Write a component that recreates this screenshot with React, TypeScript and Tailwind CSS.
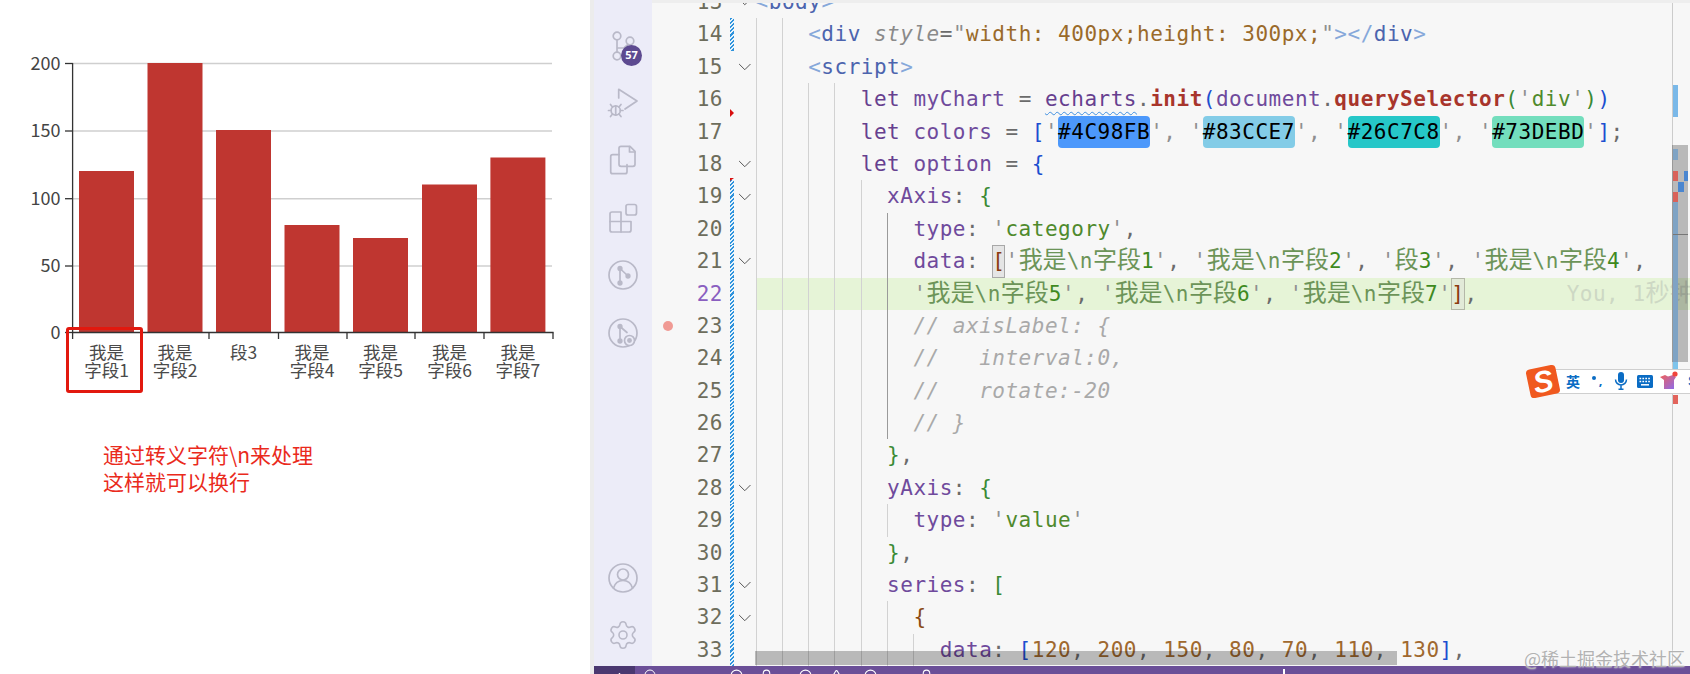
import React from 'react';
import { ChevronDown, Settings, Circle, Triangle, Check, Bell } from 'lucide-react';

// token colours
const kw = 'text-[#66408f]';
const prop = 'text-[#6f4a9c]';
const op = 'text-[#6b6b6b]';
const str = 'text-[#4f8a2d]';
const cjk = 'text-[#6c9458]';
const digit = 'text-[#3f8a1f]';
const quote = 'text-[#8f8f8f]';
const blue = 'text-[#1c4fd0]';
const green = 'text-[#3a8a34]';
const brown = 'text-[#8a4a12]';
const num = 'text-[#a0692f]';
const tagP = 'text-[#86a8da]';
const tag = 'text-[#4c64ae]';
const attr = 'text-[#8a8a8a] italic';
const val = 'text-[#9a6a2a]';
const fn = 'text-[#a8352c] font-bold';
const comment = 'text-[#a9a9a9] italic';
const box = 'inline-block h-[32.4px] bg-[#e5e5e5] outline outline-[1px] -outline-offset-1 outline-[#a8a8a8] text-[#8a3a10]';
const box2 = 'inline-block h-[32.4px] bg-[#e2ead8] outline outline-[1px] -outline-offset-1 outline-[#b4b8a8] text-[#8a3a10]';
const chipA = 'inline-block h-[32.4px] rounded-[4px] bg-[#4C98FB] text-black';
const chipB = 'inline-block h-[32.4px] rounded-[4px] bg-[#83CCE7] text-black';
const chipC = 'inline-block h-[32.4px] rounded-[4px] bg-[#26C7C8] text-black';
const chipD = 'inline-block h-[32.4px] rounded-[4px] bg-[#73DEBD] text-black';
const wavy = 'text-[#66408f] underline decoration-wavy decoration-[#3f8fe0] decoration-1 underline-offset-[5px]';
const ghost = 'text-[#cdd8c4] ml-[89px]';

type Token = [string, string];
type Row = { n: number; g: number; fold?: boolean; change?: boolean; active?: boolean; tokens: Token[] };

const strItem = (c1: string, c2: string, d: string, tail: string): Token[] => [
  ["'", quote],
  [c1 + '\\n' + c2, cjk],
  [d, digit],
  ["'", quote],
  [tail, op],
];

const rows: Row[] = [
  { n: 13, g: 0, fold: true, tokens: [['<', tagP], ['body', tag], ['>', tagP]] },
  { n: 14, g: 2, change: true, tokens: [['<', tagP], ['div', tag], [' ', op], ['style', attr], ['=', op], ['"', quote], ['width: 400px;height: 300px;', val], ['"', quote], ['>', tagP], ['</', tagP], ['div', tag], ['>', tagP]] },
  { n: 15, g: 2, fold: true, tokens: [['<', tagP], ['script', tag], ['>', tagP]] },
  { n: 16, g: 4, tokens: [['let', kw], [' myChart ', prop], ['= ', op], ['echarts', wavy], ['.', op], ['init', fn], ['(', blue], ['document', prop], ['.', op], ['querySelector', fn], ['(', green], ["'", quote], ['div', str], ["'", quote], [')', green], [')', blue]] },
  { n: 17, g: 4, tokens: [['let', kw], [' colors ', prop], ['= ', op], ['[', blue], ["'", quote], ['#4C98FB', chipA], ["', '", quote], ['#83CCE7', chipB], ["', '", quote], ['#26C7C8', chipC], ["', '", quote], ['#73DEBD', chipD], ["'", quote], [']', blue], [';', op]] },
  { n: 18, g: 4, fold: true, tokens: [['let', kw], [' option ', prop], ['= ', op], ['{', blue]] },
  { n: 19, g: 5, fold: true, change: true, tokens: [['xAxis', prop], [': ', op], ['{', green]] },
  { n: 20, g: 6, change: true, active: true, tokens: [['type', prop], [': ', op], ["'", quote], ['category', str], ["'", quote], [',', op]] },
  { n: 21, g: 6, fold: true, change: true, active: true, tokens: [['data', prop], [': ', op], ['[', box], ...strItem('我是', '字段', '1', ', '), ...strItem('我是', '字段', '2', ', '), ["'", quote], ['段', cjk], ['3', digit], ["'", quote], [', ', op], ...strItem('我是', '字段', '4', ',')] },
  { n: 22, g: 6, change: true, active: true, tokens: [...strItem('我是', '字段', '5', ', '), ...strItem('我是', '字段', '6', ', '), ...strItem('我是', '字段', '7', ''), [']', box2], [',', op], ['You, 1秒钟前', ghost]] },
  { n: 23, g: 6, change: true, active: true, tokens: [['// axisLabel: {', comment]] },
  { n: 24, g: 6, change: true, active: true, tokens: [['//   interval:0,', comment]] },
  { n: 25, g: 6, change: true, active: true, tokens: [['//   rotate:-20', comment]] },
  { n: 26, g: 6, change: true, active: true, tokens: [['// }', comment]] },
  { n: 27, g: 5, change: true, tokens: [['}', green], [',', op]] },
  { n: 28, g: 5, fold: true, change: true, tokens: [['yAxis', prop], [': ', op], ['{', green]] },
  { n: 29, g: 6, change: true, tokens: [['type', prop], [': ', op], ["'", quote], ['value', str], ["'", quote]] },
  { n: 30, g: 5, change: true, tokens: [['}', green], [',', op]] },
  { n: 31, g: 5, fold: true, change: true, tokens: [['series', prop], [': ', op], ['[', green]] },
  { n: 32, g: 6, fold: true, change: true, tokens: [['{', brown]] },
  { n: 33, g: 7, change: true, tokens: [['data', prop], [': ', op], ['[', blue], ['120', num], [', ', op], ['200', num], [', ', op], ['150', num], [', ', op], ['80', num], [', ', op], ['70', num], [', ', op], ['110', num], [', ', op], ['130', num], [']', blue], [',', op]] },
];

// CJK sits in a bigger size so that it keeps two cells of the mono grid
const Code: React.FC<{ text: string }> = ({ text }) => (
  <>
    {text.split(/([\u4e00-\u9fff]+)/).map((part, i) =>
      /[\u4e00-\u9fff]/.test(part) ? (
        <span key={i} className="text-[24px] tracking-normal leading-none">{part}</span>
      ) : (
        part
      )
    )}
  </>
);

const EditorRow: React.FC<{ row: Row }> = ({ row }) => {
  const hl = row.n === 22;
  return (
    <div className="relative flex h-[32.4px] leading-[33.6px]">
      <div className={hl ? 'w-[71px] shrink-0 text-right text-[#8a5fc0]' : 'w-[71px] shrink-0 text-right text-[#6d6d5c]'}>{row.n}</div>
      <div className="w-[7px] shrink-0"></div>
      <div className={row.change ? 'w-[4px] shrink-0 bg-[repeating-linear-gradient(135deg,#2f93dc_0,#2f93dc_1.5px,#e8f4fc_1.5px,#e8f4fc_3px)]' : 'w-[4px] shrink-0'}></div>
      <div className="flex w-[21.6px] shrink-0 items-center justify-center">
        {row.fold && <ChevronDown size={22} strokeWidth={1.1} className="text-[#555555]" />}
      </div>
      <div className={hl ? 'flex min-w-0 flex-1 bg-[#e6f4d7] overflow-hidden' : 'flex min-w-0 flex-1 overflow-hidden'}>
        {Array.from({ length: row.g }).map((_, i) => (
          <div
            key={i}
            className={row.active && i === 5 ? 'h-full w-[26.3px] shrink-0 border-l border-[#9a9a9a]' : 'h-full w-[26.3px] shrink-0 border-l border-[#d2d2d2]'}
          ></div>
        ))}
        <div className="whitespace-pre">
          {row.tokens.map(([t, c], i) => (
            <span key={i} className={c}><Code text={t} /></span>
          ))}
        </div>
      </div>
      {row.n === 23 && <div className="absolute left-[11px] top-[11px] h-[10px] w-[10px] rounded-full bg-[#f09a94]"></div>}
      {row.n === 17 && <div className="absolute left-[78px] top-[-7px] h-0 w-0 border-y-[4px] border-l-[4px] border-y-transparent border-l-[#d80f0f]"></div>}
      {row.n === 19 && <div className="absolute left-[78px] top-[-2px] h-0 w-0 border-b-[3px] border-l-[4px] border-b-transparent border-l-[#d80f0f]"></div>}
    </div>
  );
};

const Icon: React.FC<{ children: React.ReactNode }> = ({ children }) => (
  <div className="relative flex h-[57.4px] items-center justify-center">
    <svg width="32" height="32" viewBox="0 0 32 32" fill="none" stroke="#b9b9c8" strokeWidth="1.7" strokeLinecap="round" strokeLinejoin="round">
      {children}
    </svg>
  </div>
);

const Sidebar = () => (
  <div className="flex w-[58px] shrink-0 flex-col justify-between bg-[#ececf8] pb-[2px] pt-[17px]">
    <div>
      <div className="relative">
        <Icon>
          <circle cx="10" cy="6" r="3.8" />
          <circle cx="23" cy="11" r="3.8" />
          <circle cx="10" cy="26" r="3.8" />
          <path d="M10 10v12M10 18h7l4-3.5" />
        </Icon>
        <div className="absolute left-[27px] top-[28px] flex h-[21px] w-[21px] items-center justify-center rounded-full bg-[#5d4a90] font-['Noto_Sans',sans-serif] text-[11px] font-bold text-white">57</div>
      </div>
      <Icon>
        <path d="M11.7 11V2.3L30 14l-12 8" />
        <circle cx="8.7" cy="23.5" r="4.6" />
        <path d="M8.7 19v9M1.5 23.5h2.6M13.4 23.5h2.6M3.5 17.5l2 2.5M14 17.5L12 20M3.5 29.5l2-2.5M14 29.5L12 27" />
      </Icon>
      <Icon>
        <path d="M12 4.3a2 2 0 0 1 2-2h9l5 5v13a2 2 0 0 1-2 2H14a2 2 0 0 1-2-2z" />
        <path d="M22.5 2.5V8H28" />
        <path d="M12 10.7H5.7a2 2 0 0 0-2 2v15a2 2 0 0 0 2 2H18a2 2 0 0 0 2-2v-7" />
      </Icon>
      <Icon>
        <path d="M3 12a2 2 0 0 1 2-2h9v9.5h10V28a2 2 0 0 1-2 2H5a2 2 0 0 1-2-2z" />
        <path d="M3 19.5h11M14 19.5V30" />
        <rect x="19" y="2.5" width="10.5" height="10.5" rx="2" />
      </Icon>
      <Icon>
        <circle cx="16" cy="16" r="14" />
        <circle cx="13" cy="9.5" r="1.8" fill="#b9b9c8" />
        <circle cx="21" cy="17" r="1.8" fill="#b9b9c8" />
        <circle cx="13" cy="24" r="1.8" fill="#b9b9c8" />
        <path d="M13 9.5V24M13 9.5l8 7.5" />
      </Icon>
      <Icon>
        <circle cx="16" cy="16" r="14" />
        <circle cx="13" cy="9.5" r="1.8" fill="#b9b9c8" />
        <circle cx="13" cy="24" r="1.8" fill="#b9b9c8" />
        <path d="M13 9.5V24M13 9.5l7 6" />
        <circle cx="22.5" cy="23.5" r="5" fill="#ececf8" />
        <circle cx="22.5" cy="23.5" r="1.6" fill="#b9b9c8" />
      </Icon>
    </div>
    <div>
      <Icon>
        <circle cx="16" cy="16" r="14" />
        <circle cx="16" cy="12.5" r="5.5" />
        <path d="M6.5 26c1.5-5 5-7.5 9.5-7.5s8 2.5 9.5 7.5" />
      </Icon>
      <div className="flex h-[57.4px] items-center justify-center">
        <Settings size={32} strokeWidth={1.2} className="text-[#b9b9c8]" />
      </div>
    </div>
  </div>
);

const bars = [
  { x: 79, top: 171 },
  { x: 147.5, top: 63 },
  { x: 216, top: 130 },
  { x: 284.5, top: 225 },
  { x: 353, top: 238 },
  { x: 422, top: 184.5 },
  { x: 490.4, top: 157.5 },
];
const gridY = [63.5, 131, 198.7, 266, 332.5];
const ticksX = [72.6, 141, 209, 278.5, 347, 415, 484, 553];
const labels = [
  ['我是', '字段1'],
  ['我是', '字段2'],
  ['段3'],
  ['我是', '字段4'],
  ['我是', '字段5'],
  ['我是', '字段6'],
  ['我是', '字段7'],
];

const Chart = () => (
  <svg width="590" height="441" className="block font-['Noto_Sans_CJK_SC',sans-serif]">
    {gridY.slice(0, 4).map(y => (
      <line key={y} x1="72" x2="552" y1={y} y2={y} stroke="#cfcfcf" strokeWidth="1.5" />
    ))}
    {bars.map(b => (
      <rect key={b.x} x={b.x} y={b.top} width="55" height={332.5 - b.top} fill="#bf3630" />
    ))}
    {gridY.map(y => (
      <line key={y} x1="65" x2="72.6" y1={y} y2={y} stroke="#333333" strokeWidth="1.3" />
    ))}
    <line x1="72.6" x2="72.6" y1="63" y2="333" stroke="#333333" strokeWidth="1.3" />
    <line x1="72" x2="553.6" y1="332.5" y2="332.5" stroke="#333333" strokeWidth="1.3" />
    {ticksX.map(x => (
      <line key={x} x1={x} x2={x} y1="332.5" y2="339" stroke="#333333" strokeWidth="1.3" />
    ))}
    {['200', '150', '100', '50', '0'].map((t, i) => (
      <text key={t} x="60.5" y={gridY[i] + 6} textAnchor="end" fontSize="18" fill="#444444">{t}</text>
    ))}
    {labels.map((l, i) =>
      l.map((t, j) => (
        <text key={t} x={bars[i].x + 27.5} y={358.5 + j * 18} textAnchor="middle" fontSize="17.5" fill="#4a4a4a">{t}</text>
      ))
    )}
  </svg>
);

const Ime = () => (
  <div className="absolute left-[1526px] top-[362px] flex h-[38px] w-[164px] items-center overflow-hidden">
    <div className="absolute left-[23px] top-[7px] h-[25px] w-[150px] border-y border-[#cfcfcf] bg-white"></div>
    <div className="relative z-10 ml-[2px] flex h-[29px] w-[30px] shrink-0 -rotate-12 items-center justify-center rounded-[4px] bg-[#f0591f] font-['Liberation_Sans',sans-serif] text-[30px] font-bold italic leading-none text-white">S</div>
    <div className="relative z-10 ml-[3px] flex shrink-0 items-center text-[#0a6cc4]">
      <div className="flex w-[24px] shrink-0 justify-center font-['Noto_Sans_CJK_SC',sans-serif] text-[14px] font-bold">英</div>
      <div className="flex w-[24px] shrink-0 items-center justify-center gap-[3px] font-['Noto_Sans',sans-serif] text-[13px] font-bold"><span className="h-[4px] w-[4px] -translate-y-[3px] rounded-full bg-[#0a6cc4]"></span>,</div>
      <div className="flex w-[24px] shrink-0 justify-center">
        <svg width="14" height="18" viewBox="0 0 14 18">
          <rect x="4" y="0" width="6" height="11" rx="3" fill="#0a6cc4" />
          <path d="M1.5 7.5a5.5 5.5 0 0 0 11 0M7 13v4M4.5 17.3h5" fill="none" stroke="#0a6cc4" strokeWidth="1.5" />
        </svg>
      </div>
      <div className="flex w-[24px] shrink-0 justify-center">
        <svg width="16" height="13" viewBox="0 0 16 13">
          <rect width="16" height="13" rx="1.5" fill="#0a6cc4" />
          <path d="M2.5 3.5h11M2.5 6.5h11" stroke="#ffffff" strokeWidth="1.5" strokeDasharray="1.7 1.2" />
          <path d="M4 9.8h8" stroke="#ffffff" strokeWidth="1.5" />
        </svg>
      </div>
      <div className="flex w-[24px] shrink-0 justify-center">
        <svg width="18" height="20" viewBox="0 0 18 20">
          <defs>
            <linearGradient id="shirt" x1="0" y1="0" x2="1" y2="1">
              <stop offset="0" stopColor="#f0605a" />
              <stop offset="1" stopColor="#8a6cf0" />
            </linearGradient>
          </defs>
          <path d="M0 6l5-2 3 1.5L13 4l3 2-2 3v9H4V9z" fill="url(#shirt)" />
          <circle cx="15" cy="3" r="2.6" fill="#f0443c" />
        </svg>
      </div>
      <div className="flex w-[24px] shrink-0 justify-start pl-[7px] font-['Liberation_Sans',sans-serif] text-[15px] font-bold">S</div>
    </div>
  </div>
);

const App = () => {
  return (
    <div className="relative flex h-[674px] w-[1690px] overflow-hidden bg-white">
      {/* Left: the chart and its note */}
      <div className="relative w-[590px] shrink-0 bg-white">
        <Chart />
        <div className="pl-[103px] font-['Noto_Sans_CJK_SC',sans-serif] text-[21px] leading-[27px] text-[#ea2a1c]">
          <div>通过转义字符\n来处理</div>
          <div>这样就可以换行</div>
        </div>
        <div className="absolute left-[66px] top-[327px] h-[66px] w-[77px] rounded-[3px] border-[3px] border-[#e2180e]"></div>
      </div>

      {/* Right: the editor */}
      <div className="relative flex min-w-0 flex-1 flex-col border-l-4 border-[#ececec] bg-[#f7f7f7]">
        <div className="flex min-h-0 flex-1">
          <Sidebar />
          <div className="min-w-0 flex-1 overflow-hidden">
            <div className="-mt-[14px] font-['DejaVu_Sans_Mono','Noto_Sans_CJK_SC',monospace] text-[21px] tracking-[0.51px]">
              {rows.map(r => (
                <EditorRow key={r.n} row={r} />
              ))}
            </div>
          </div>
        </div>
        <div className="flex h-[8px] shrink-0 overflow-hidden bg-[#6b4f98] text-white">
          <div className="flex w-[41px] justify-center bg-[#4a3870] pt-[4px]"><Check size={14} /></div>
          <div className="flex pt-[3px]">
            <Circle size={12} className="ml-[9px]" />
            <Circle size={13} className="ml-[74px]" />
            <Bell size={13} className="ml-[17px]" />
            <Circle size={13} className="ml-[26px]" />
            <Triangle size={13} className="ml-[18px]" />
            <Circle size={13} className="ml-[21px]" />
            <Bell size={13} className="ml-[43px]" />
            <div className="ml-[350px] h-[6px] w-[2px] bg-white"></div>
          </div>
        </div>
      </div>

      {/* Things lying over the editor */}
      <div className="absolute left-[652px] right-0 top-0 h-[3px] bg-[#eeeeee]"></div>
      <div className="absolute left-[755px] top-[651px] h-[14px] w-[642px] bg-black/25"></div>
      <div className="absolute bottom-[8px] left-[1672px] top-[3px] w-[1px] bg-[#cccccc]"></div>
      <div className="absolute left-[1673px] top-[85px] h-[32px] w-[5px] bg-[#7ab8e8]"></div>
      <div className="absolute left-[1672px] top-[145px] h-[217px] w-[16px] bg-black/25"></div>
      <div className="absolute left-[1673px] top-[149px] h-[11px] w-[5px] bg-[#7fa3c4]"></div>
      <div className="absolute left-[1673px] top-[171px] h-[10px] w-[5px] bg-[#d9625a]"></div>
      <div className="absolute left-[1684px] top-[171px] h-[10px] w-[4px] bg-[#4a86d0]"></div>
      <div className="absolute left-[1678px] top-[182px] h-[10px] w-[6px] bg-[#4a86d0]"></div>
      <div className="absolute left-[1673px] top-[192px] h-[10px] w-[5px] bg-[#d9625a]"></div>
      <div className="absolute left-[1673px] top-[202px] h-[160px] w-[5px] bg-[#7fa3c4]"></div>
      <div className="absolute left-[1673px] top-[234px] h-[1px] w-[15px] bg-[#777777]"></div>
      <div className="absolute left-[1673px] top-[362px] h-[8px] w-[5px] bg-[#7ec4ec]"></div>
      <div className="absolute left-[1673px] top-[395px] h-[9px] w-[5px] bg-[#e2645c]"></div>
      <Ime />
      <div className="absolute left-[1524px] top-[646px] font-['Noto_Sans_CJK_SC',sans-serif] text-[18px] leading-[24px] text-[#b2b2b2] [text-shadow:0_0_2px_#ffffff]">@稀土掘金技术社区</div>
    </div>
  );
};

export default App;
